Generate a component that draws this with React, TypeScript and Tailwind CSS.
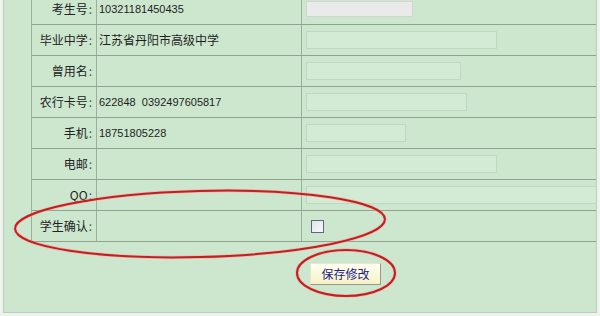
import React from "react";

type Row = {
  label: string;
  value?: string;
  input?: "disabled" | "text" | "check";
  w?: string;
};

const rows: Row[] = [
  { label: "考生号", value: "10321181450435", input: "disabled", w: "w-[107px]" },
  { label: "毕业中学", value: "江苏省丹阳市高级中学", input: "text", w: "w-[191px]" },
  { label: "曾用名", value: "", input: "text", w: "w-[155px]" },
  { label: "农行卡号", value: "622848  0392497605817", input: "text", w: "w-[161px]" },
  { label: "手机", value: "18751805228", input: "text", w: "w-[100px]" },
  { label: "电邮", value: "", input: "text", w: "w-[191px]" },
  { label: "QQ", value: "", input: "text", w: "w-[292px]" },
  { label: "学生确认", value: "", input: "check" },
];

export default function App() {
  return (
    <div className="relative w-[600px] h-[316px] overflow-hidden bg-[#eef3ee] font-['Noto_Sans_CJK_SC','Liberation_Sans',sans-serif]">
      <div className="ml-[3px] w-[594px] h-[313px] bg-[#cde7cf] border-l border-r border-b border-[#b9cfbb] overflow-hidden">
        <div className="ml-[27px] mt-[-6px] w-[567px] border-l border-[#9bb09d] border-r border-r-[#b7ccb9]">
          {rows.map((r) => (
            <div
              key={r.label}
              className="grid grid-cols-[65px_205px_1fr] h-[31px] border-b border-[#8ea48f]"
            >
              <div className="flex items-center justify-end pr-[4px] text-[12px] text-[#222] border-r border-[#9bb09d]">
                {r.label}
                <span className="ml-[1px] text-[#555]">:</span>
              </div>
              <div
                className={
                  "flex items-center pl-[2px] whitespace-pre text-[#1e1e1e] border-r border-[#9bb09d] " +
                  (r.label === "毕业中学" ? "text-[12px]" : "text-[11px] font-['Liberation_Sans',sans-serif]")
                }
              >
                {r.value}
              </div>
              <div className="flex items-center pl-[4px]">
                {r.input === "disabled" && (
                  <div className={`${r.w} h-[16px] bg-[#e9eae9] border border-[#d2d6d2]`} />
                )}
                {r.input === "text" && (
                  <div className={`${r.w} h-[18px] bg-[#d3ead5] border border-[#bfd8c1]`} />
                )}
                {r.input === "check" && (
                  <div className="ml-[5px] w-[13px] h-[13px] border border-[#5a6a7a] bg-gradient-to-br from-[#dfe6ee] to-[#f6f8fa]" />
                )}
              </div>
            </div>
          ))}
        </div>
        <div className="flex pl-[306px] pt-[21px]">
          <button className="w-[71px] h-[22px] text-[12px] text-[#1c1c8a] bg-gradient-to-b from-[#fffff2] to-[#f7f2c4] border border-[#e8e6cc] border-r-[#9a9a8a] border-b-[#9a9a8a]">
            保存修改
          </button>
        </div>
      </div>
      <svg className="absolute left-0 top-0 pointer-events-none" width="600" height="316">
        <ellipse cx="200" cy="224" rx="185" ry="33" fill="none" stroke="#f0a0a0" strokeWidth="3.5" opacity="0.6" transform="rotate(-1.5 200 224)" />
        <ellipse cx="200" cy="224" rx="185" ry="33" fill="none" stroke="#c41e1e" strokeWidth="2" transform="rotate(-1.5 200 224)" />
        <ellipse cx="346" cy="273" rx="49" ry="23" fill="none" stroke="#f0a0a0" strokeWidth="3.5" opacity="0.6" />
        <ellipse cx="346" cy="273" rx="49" ry="23" fill="none" stroke="#c41e1e" strokeWidth="2" />
      </svg>
    </div>
  );
}
